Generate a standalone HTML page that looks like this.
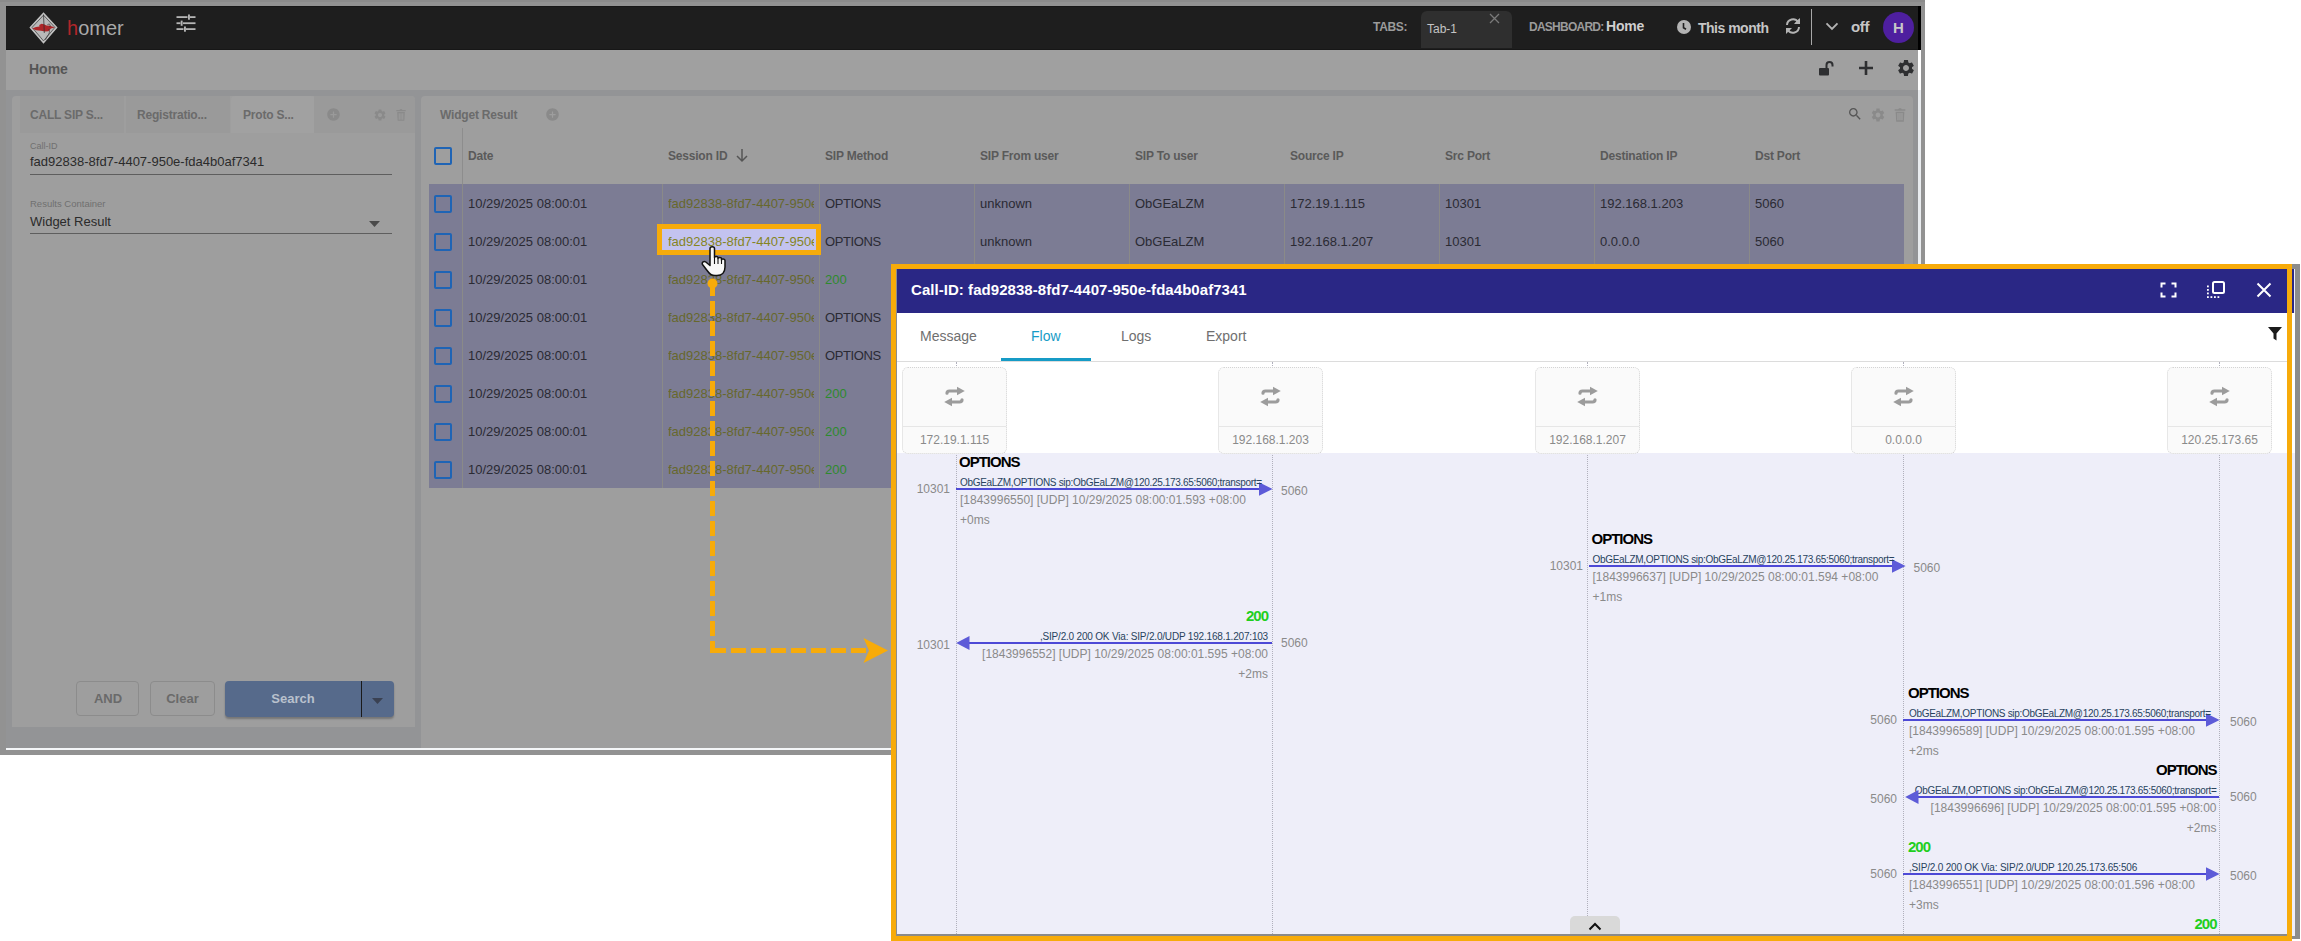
<!DOCTYPE html>
<html><head><meta charset="utf-8"><title>homer</title>
<style>
html,body{margin:0;padding:0;}
body{width:2301px;height:941px;position:relative;overflow:hidden;background:#ffffff;font-family:"Liberation Sans",sans-serif;}
.t{position:absolute;white-space:nowrap;}
.r{position:absolute;}
</style></head><body>
<div class="r" style="left:0px;top:0px;width:1925px;height:755px;background:#929292;"></div>
<div class="r" style="left:0px;top:0px;width:1925px;height:2px;background:#8b8b8b;"></div>
<div class="r" style="left:6px;top:6px;width:1915px;height:743px;background:#939496;"></div>
<div class="r" style="left:6px;top:748px;width:1915px;height:2px;background:#f4f6f8;"></div>
<div class="r" style="left:6px;top:6px;width:1915px;height:44px;background:#1e1e1e;"></div>
<div class="r" style="left:6px;top:6px;width:1912px;height:1px;background:#171717;"></div>
<div class="r" style="left:6px;top:49px;width:1912px;height:1px;background:#171717;"></div>
<div class="r" style="left:1918px;top:6px;width:3px;height:44px;background:#000;"></div>
<div class="r" style="left:1918px;top:50px;width:3px;height:40px;background:#ffffff;"></div>
<div class="r" style="left:1918px;top:90px;width:3px;height:658px;background:#e9ecef;"></div>
<div class="r" style="left:6px;top:50px;width:1912px;height:40px;background:#a0a0a0;"></div>
<svg class="r" style="left:29px;top:12px" width="30" height="32" viewBox="0 0 30 32">
<path d="M14.5 1.3 L27.7 15.4 L14.5 30.8 L1.3 15.4 Z" fill="#b9b9b9" stroke="#c4c4c4" stroke-width="1.3"/>
<path d="M14.5 3.2 L25.9 15.4 L14.5 28.9 L3.1 15.4 Z" fill="none" stroke="#3a3a3a" stroke-width="0.7"/>
<path d="M3.2 16.6 L7 15 L10.5 14.6 L10.2 13 L12.5 11.8 L15 12.3 L17.5 13.5 L21 13.8 L25.8 15.4 L22 16.4 L19.5 19.2 L16 19.6 L12 18.8 L7 18.2 Z" fill="#ad2528"/>
<path d="M14.5 2.5 L15.3 21" stroke="#2a2a2a" stroke-width="0.7" fill="none"/>
<path d="M18.5 12.5 C21 11.5 22 13 20.5 15 M19.5 17 C21.5 19 20 22 18.5 24 C17.5 25.5 17 27 16.5 28" stroke="#333" stroke-width="0.7" fill="none"/>
</svg>
<div class="t" style="left:67px;top:15.5px;font-size:20px;line-height:24px;color:#a9a9a9;font-weight:400;"><span style="color:#b0262a">h</span>omer</div>
<svg class="r" style="left:176px;top:13.7px" width="20" height="20" viewBox="0 0 20 20" fill="#b5b5b5">
<rect x="0.5" y="2.2" width="11" height="1.8"/><rect x="12" y="0.5" width="1.9" height="5.2"/><rect x="14" y="2.2" width="5.5" height="1.8"/>
<rect x="0.5" y="8.3" width="4" height="1.8"/><rect x="4.7" y="6.6" width="1.9" height="5.2"/><rect x="7" y="8.3" width="12.5" height="1.8"/>
<rect x="0.5" y="14.2" width="7" height="1.8"/><rect x="8" y="12.5" width="1.9" height="5.2"/><rect x="10" y="14.2" width="9.5" height="1.8"/>
</svg>
<div class="t" style="left:1373px;top:16.5px;font-size:12px;line-height:20px;color:#9b9b9b;font-weight:700;letter-spacing:-0.3px">TABS:</div>
<div class="r" style="left:1421px;top:11px;width:91px;height:37px;background:#2f2f2f;border-radius:6px 6px 0 0"></div>
<div class="t" style="left:1427px;top:19.0px;font-size:12px;line-height:20px;color:#c4c4c4;font-weight:500;">Tab-1</div>
<svg class="r" style="left:1489px;top:13px" width="11" height="11" viewBox="0 0 11 11"><path d="M1 1L10 10M10 1L1 10" stroke="#7a7a7a" stroke-width="1.3"/></svg>
<div class="t" style="left:1529px;top:16.5px;font-size:12px;line-height:20px;color:#9b9b9b;font-weight:700;letter-spacing:-0.75px">DASHBOARD:</div>
<div class="t" style="left:1606px;top:16.0px;font-size:14px;line-height:20px;color:#cfcfcf;font-weight:700;letter-spacing:-0.2px">Home</div>
<svg class="r" style="left:1676px;top:19px" width="16" height="16" viewBox="0 0 16 16"><circle cx="8" cy="8" r="7" fill="#b3b3b3"/><path d="M7.5 4 V8.8 L10 10.3" stroke="#1e1e1e" stroke-width="1.6" fill="none"/></svg>
<div class="t" style="left:1698px;top:17.5px;font-size:14px;line-height:20px;color:#c6c6c6;font-weight:700;letter-spacing:-0.5px">This month</div>
<svg class="r" style="left:1784px;top:17px" width="18" height="18" viewBox="0 0 18 18" fill="none" stroke="#b3b3b3" stroke-width="2">
<path d="M3 8 A6 6 0 0 1 14 5"/><path d="M15 10 A6 6 0 0 1 4 13"/>
<path d="M15.5 1.5 V6.5 H10.5" fill="#b3b3b3" stroke="none"/><path d="M16 1 L16 7 L10 7 Z" fill="#b3b3b3" stroke="none"/>
<path d="M2 17 L2 11 L8 11 Z" fill="#b3b3b3" stroke="none"/>
</svg>
<div class="r" style="left:1811px;top:9px;width:1px;height:36px;background:#a8a8a8;"></div>
<svg class="r" style="left:1825px;top:21px" width="14" height="10" viewBox="0 0 14 10"><path d="M1.5 2.3L7 7.8L12.5 2.3" stroke="#b3b3b3" stroke-width="1.9" fill="none"/></svg>
<div class="t" style="left:1851px;top:16.5px;font-size:15px;line-height:20px;color:#c6c6c6;font-weight:700;letter-spacing:-0.3px">off</div>
<div class="r" style="left:1883px;top:12px;width:31px;height:31px;border-radius:50%;background:#4e1f9f"></div>
<div class="t" style="left:1883px;top:18.0px;font-size:15px;line-height:20px;color:#c8c8c8;font-weight:700;width:31px;text-align:center">H</div>
<div class="t" style="left:29px;top:59.0px;font-size:14px;line-height:20px;color:#555555;font-weight:700;">Home</div>
<svg class="r" style="left:1818px;top:60px" width="16" height="16" viewBox="0 0 16 16" fill="#2e2f31">
<rect x="1" y="8" width="10" height="7.5" rx="1"/><path d="M8.5 8 V5 A3 3 0 0 1 14.5 5 V6.5" stroke="#2e2f31" stroke-width="2" fill="none"/></svg>
<svg class="r" style="left:1858px;top:60px" width="16" height="16" viewBox="0 0 16 16"><path d="M8 1V15M1 8H15" stroke="#2e2f31" stroke-width="2.6"/></svg>
<svg class="r" style="left:1896px;top:58px" width="20" height="20" viewBox="0 0 24 24"><path fill="#2e2f31" d="M19.14 12.94c.04-.3.06-.61.06-.94 0-.32-.02-.64-.07-.94l2.03-1.58c.18-.14.23-.41.12-.61l-1.92-3.32c-.12-.22-.37-.29-.59-.22l-2.39.96c-.5-.38-1.03-.7-1.62-.94l-.36-2.54c-.04-.24-.24-.41-.48-.41h-3.84c-.24 0-.43.17-.47.41l-.36 2.54c-.59.24-1.13.57-1.62.94l-2.39-.96c-.22-.08-.47 0-.59.22L2.74 8.87c-.12.21-.08.47.12.61l2.03 1.58c-.05.3-.09.63-.09.94s.02.64.07.94l-2.03 1.58c-.18.14-.23.41-.12.61l1.92 3.32c.12.22.37.29.59.22l2.39-.96c.5.38 1.03.7 1.62.94l.36 2.54c.05.24.24.41.48.41h3.84c.24 0 .44-.17.47-.41l.36-2.54c.59-.24 1.13-.56 1.62-.94l2.39.96c.22.08.47 0 .59-.22l1.92-3.32c.12-.22.07-.47-.12-.61l-2.01-1.58zM12 15.6c-1.98 0-3.6-1.62-3.6-3.6s1.62-3.6 3.6-3.6 3.6 1.62 3.6 3.6-1.62 3.6-3.6 3.6z"/></svg>
<div class="r" style="left:12px;top:96px;width:403px;height:631px;background:#9e9e9e;border-radius:4px 4px 0 0"></div>
<div class="r" style="left:20px;top:96px;width:104px;height:37px;background:#9a9a9a;"></div>
<div class="r" style="left:126px;top:96px;width:104px;height:37px;background:#9a9a9a;"></div>
<div class="r" style="left:231px;top:96px;width:84px;height:37px;background:#a1a1a1;border-radius:4px 4px 0 0"></div>
<div class="r" style="left:314px;top:96px;width:101px;height:37px;background:#9a9a9a;border-radius:0 4px 0 0"></div>
<div class="t" style="left:30px;top:104.5px;font-size:12px;line-height:20px;color:#6b6b6b;font-weight:700;letter-spacing:-0.2px">CALL SIP S...</div>
<div class="t" style="left:137px;top:104.5px;font-size:12px;line-height:20px;color:#6b6b6b;font-weight:700;letter-spacing:-0.2px">Registratio...</div>
<div class="t" style="left:243px;top:104.5px;font-size:12px;line-height:20px;color:#6b6b6b;font-weight:700;letter-spacing:-0.2px">Proto S...</div>
<svg class="r" style="left:326px;top:107px" width="15" height="15" viewBox="0 0 24 24"><path fill="#8a8a8a" d="M12 2C6.48 2 2 6.48 2 12s4.48 10 10 10 10-4.48 10-10S17.52 2 12 2zm5 11h-4v4h-2v-4H7v-2h4V7h2v4h4v2z"/></svg>
<svg class="r" style="left:373px;top:108px" width="14" height="14" viewBox="0 0 24 24"><path fill="#8a8a8a" d="M19.14 12.94c.04-.3.06-.61.06-.94 0-.32-.02-.64-.07-.94l2.03-1.58c.18-.14.23-.41.12-.61l-1.92-3.32c-.12-.22-.37-.29-.59-.22l-2.39.96c-.5-.38-1.03-.7-1.62-.94l-.36-2.54c-.04-.24-.24-.41-.48-.41h-3.84c-.24 0-.43.17-.47.41l-.36 2.54c-.59.24-1.13.57-1.62.94l-2.39-.96c-.22-.08-.47 0-.59.22L2.74 8.87c-.12.21-.08.47.12.61l2.03 1.58c-.05.3-.09.63-.09.94s.02.64.07.94l-2.03 1.58c-.18.14-.23.41-.12.61l1.92 3.32c.12.22.37.29.59.22l2.39-.96c.5.38 1.03.7 1.62.94l.36 2.54c.05.24.24.41.48.41h3.84c.24 0 .44-.17.47-.41l.36-2.54c.59-.24 1.13-.56 1.62-.94l2.39.96c.22.08.47 0 .59-.22l1.92-3.32c.12-.22.07-.47-.12-.61l-2.01-1.58zM12 15.6c-1.98 0-3.6-1.62-3.6-3.6s1.62-3.6 3.6-3.6 3.6 1.62 3.6 3.6-1.62 3.6-3.6 3.6z"/></svg>
<svg class="r" style="left:394px;top:108px" width="14" height="14" viewBox="0 0 24 24"><path fill="#8a8a8a" d="M4 3.5H9.5L10.5 2H13.5L14.5 3.5H20V5.5H4Z"/><path fill="#8a8a8a" d="M5.5 7H18.5L17.7 22H6.3Z M8 9V20H10V9Z M11 9V20H13V9Z M14 9V20H16V9Z" fill-rule="evenodd"/></svg>
<div class="t" style="left:30px;top:135.5px;font-size:9px;line-height:20px;color:#707070;font-weight:400;">Call-ID</div>
<div class="t" style="left:30px;top:152.0px;font-size:13px;line-height:20px;color:#2b2b2b;font-weight:400;letter-spacing:0px">fad92838-8fd7-4407-950e-fda4b0af7341</div>
<div class="r" style="left:30px;top:174px;width:362px;height:1px;background:#5e5e5e;"></div>
<div class="t" style="left:30px;top:194.0px;font-size:9.5px;line-height:20px;color:#707070;font-weight:400;">Results Container</div>
<div class="t" style="left:30px;top:212.0px;font-size:13px;line-height:20px;color:#2b2b2b;font-weight:400;">Widget Result</div>
<svg class="r" style="left:369px;top:221px" width="11" height="6" viewBox="0 0 11 6"><path d="M0 0H11L5.5 6Z" fill="#4a4a4a"/></svg>
<div class="r" style="left:30px;top:233px;width:362px;height:1px;background:#5e5e5e;"></div>
<div class="r" style="left:76px;top:681px;width:63px;height:35px;border:1px solid #8c8c8c;border-radius:4px;box-sizing:border-box"></div>
<div class="t" style="left:76px;top:688.5px;font-size:13px;line-height:20px;color:#6a6a6a;font-weight:700;width:64px;text-align:center">AND</div>
<div class="r" style="left:150px;top:681px;width:65px;height:35px;border:1px solid #8c8c8c;border-radius:4px;box-sizing:border-box"></div>
<div class="t" style="left:150px;top:688.5px;font-size:13px;line-height:20px;color:#6a6a6a;font-weight:700;width:65px;text-align:center">Clear</div>
<div class="r" style="left:225px;top:681px;width:169px;height:36px;background:#566a8b;border-radius:4px;box-shadow:0 2px 2px rgba(0,0,0,0.25)"></div>
<div class="t" style="left:225px;top:688.5px;font-size:13px;line-height:20px;color:#b9c1cd;font-weight:700;width:136px;text-align:center">Search</div>
<div class="r" style="left:361px;top:681px;width:1px;height:36px;background:#1a1a1a;"></div>
<svg class="r" style="left:372px;top:698px" width="11" height="6" viewBox="0 0 11 6"><path d="M0 0H11L5.5 6Z" fill="#3a4152"/></svg>
<div class="r" style="left:421px;top:96px;width:1492px;height:652px;background:#9e9e9e;border-radius:4px 4px 0 0"></div>
<div class="t" style="left:440px;top:104.5px;font-size:12px;line-height:20px;color:#6b6b6b;font-weight:700;letter-spacing:-0.2px">Widget Result</div>
<svg class="r" style="left:545px;top:107px" width="15" height="15" viewBox="0 0 24 24"><path fill="#8a8a8a" d="M12 2C6.48 2 2 6.48 2 12s4.48 10 10 10 10-4.48 10-10S17.52 2 12 2zm5 11h-4v4h-2v-4H7v-2h4V7h2v4h4v2z"/></svg>
<svg class="r" style="left:1847px;top:106px" width="16" height="16" viewBox="0 0 24 24"><path fill="#555" d="M15.5 14h-.79l-.28-.27C15.41 12.59 16 11.11 16 9.5 16 5.91 13.09 3 9.5 3S3 5.91 3 9.5 5.91 16 9.5 16c1.61 0 3.09-.59 4.23-1.57l.27.28v.79l5 4.99L20.49 19l-4.99-5zm-6 0C7.01 14 5 11.99 5 9.5S7.01 5 9.5 5 14 7.01 14 9.5 11.99 14 9.5 14z"/></svg>
<svg class="r" style="left:1870px;top:107px" width="16" height="16" viewBox="0 0 24 24"><path fill="#8a8a8a" d="M19.14 12.94c.04-.3.06-.61.06-.94 0-.32-.02-.64-.07-.94l2.03-1.58c.18-.14.23-.41.12-.61l-1.92-3.32c-.12-.22-.37-.29-.59-.22l-2.39.96c-.5-.38-1.03-.7-1.62-.94l-.36-2.54c-.04-.24-.24-.41-.48-.41h-3.84c-.24 0-.43.17-.47.41l-.36 2.54c-.59.24-1.13.57-1.62.94l-2.39-.96c-.22-.08-.47 0-.59.22L2.74 8.87c-.12.21-.08.47.12.61l2.03 1.58c-.05.3-.09.63-.09.94s.02.64.07.94l-2.03 1.58c-.18.14-.23.41-.12.61l1.92 3.32c.12.22.37.29.59.22l2.39-.96c.5.38 1.03.7 1.62.94l.36 2.54c.05.24.24.41.48.41h3.84c.24 0 .44-.17.47-.41l.36-2.54c.59-.24 1.13-.56 1.62-.94l2.39.96c.22.08.47 0 .59-.22l1.92-3.32c.12-.22.07-.47-.12-.61l-2.01-1.58zM12 15.6c-1.98 0-3.6-1.62-3.6-3.6s1.62-3.6 3.6-3.6 3.6 1.62 3.6 3.6-1.62 3.6-3.6 3.6z"/></svg>
<svg class="r" style="left:1892px;top:107px" width="16" height="16" viewBox="0 0 24 24"><path fill="#8a8a8a" d="M4 3.5H9.5L10.5 2H13.5L14.5 3.5H20V5.5H4Z"/><path fill="#8a8a8a" d="M5.5 7H18.5L17.7 22H6.3Z M8 9V20H10V9Z M11 9V20H13V9Z M14 9V20H16V9Z" fill-rule="evenodd"/></svg>
<div class="r" style="left:434px;top:147px;width:18px;height:18px;border:2px solid #1f64b5;border-radius:2px;box-sizing:border-box"></div>
<div class="r" style="left:462px;top:128px;width:1px;height:56px;background:#8d8d8d;"></div>
<div class="t" style="left:468px;top:145.5px;font-size:12px;line-height:20px;color:#5a5a5a;font-weight:700;letter-spacing:-0.2px">Date</div>
<div class="t" style="left:668px;top:145.5px;font-size:12px;line-height:20px;color:#5a5a5a;font-weight:700;letter-spacing:-0.2px">Session ID</div>
<div class="t" style="left:825px;top:145.5px;font-size:12px;line-height:20px;color:#5a5a5a;font-weight:700;letter-spacing:-0.2px">SIP Method</div>
<div class="t" style="left:980px;top:145.5px;font-size:12px;line-height:20px;color:#5a5a5a;font-weight:700;letter-spacing:-0.2px">SIP From user</div>
<div class="t" style="left:1135px;top:145.5px;font-size:12px;line-height:20px;color:#5a5a5a;font-weight:700;letter-spacing:-0.2px">SIP To user</div>
<div class="t" style="left:1290px;top:145.5px;font-size:12px;line-height:20px;color:#5a5a5a;font-weight:700;letter-spacing:-0.2px">Source IP</div>
<div class="t" style="left:1445px;top:145.5px;font-size:12px;line-height:20px;color:#5a5a5a;font-weight:700;letter-spacing:-0.2px">Src Port</div>
<div class="t" style="left:1600px;top:145.5px;font-size:12px;line-height:20px;color:#5a5a5a;font-weight:700;letter-spacing:-0.2px">Destination IP</div>
<div class="t" style="left:1755px;top:145.5px;font-size:12px;line-height:20px;color:#5a5a5a;font-weight:700;letter-spacing:-0.2px">Dst Port</div>
<svg class="r" style="left:735px;top:148px" width="14" height="15" viewBox="0 0 14 15"><path d="M7 1V13M2 8L7 13L12 8" stroke="#555" stroke-width="1.5" fill="none"/></svg>
<div class="r" style="left:429px;top:184px;width:1475px;height:304px;background:#7c7c94;"></div>
<div class="r" style="left:462px;top:184px;width:1px;height:304px;background:#8a8a88;"></div>
<div class="r" style="left:662px;top:184px;width:1px;height:304px;background:#8a8a88;"></div>
<div class="r" style="left:819px;top:184px;width:1px;height:304px;background:#8a8a88;"></div>
<div class="r" style="left:974px;top:184px;width:1px;height:304px;background:#8a8a88;"></div>
<div class="r" style="left:1129px;top:184px;width:1px;height:304px;background:#8a8a88;"></div>
<div class="r" style="left:1284px;top:184px;width:1px;height:304px;background:#8a8a88;"></div>
<div class="r" style="left:1439px;top:184px;width:1px;height:304px;background:#8a8a88;"></div>
<div class="r" style="left:1594px;top:184px;width:1px;height:304px;background:#8a8a88;"></div>
<div class="r" style="left:1749px;top:184px;width:1px;height:304px;background:#8a8a88;"></div>
<div class="r" style="left:434px;top:194.5px;width:18px;height:18px;border:2px solid #1f64b5;border-radius:2px;box-sizing:border-box"></div>
<div class="t" style="left:468px;top:193.5px;font-size:13px;line-height:20px;color:#2a2a33;font-weight:400;">10/29/2025 08:00:01</div>
<div class="t" style="left:668px;top:193.5px;font-size:13px;line-height:20px;color:#67682c;font-weight:400;width:146px;overflow:hidden;white-space:nowrap">fad92838-8fd7-4407-950e</div>
<div class="t" style="left:825px;top:193.5px;font-size:13px;line-height:20px;color:#2a2a33;font-weight:400;letter-spacing:-0.4px">OPTIONS</div>
<div class="t" style="left:980px;top:193.5px;font-size:13px;line-height:20px;color:#2a2a33;font-weight:400;">unknown</div>
<div class="t" style="left:1135px;top:193.5px;font-size:13px;line-height:20px;color:#2a2a33;font-weight:400;">ObGEaLZM</div>
<div class="t" style="left:1290px;top:193.5px;font-size:13px;line-height:20px;color:#2a2a33;font-weight:400;">172.19.1.115</div>
<div class="t" style="left:1445px;top:193.5px;font-size:13px;line-height:20px;color:#2a2a33;font-weight:400;">10301</div>
<div class="t" style="left:1600px;top:193.5px;font-size:13px;line-height:20px;color:#2a2a33;font-weight:400;">192.168.1.203</div>
<div class="t" style="left:1755px;top:193.5px;font-size:13px;line-height:20px;color:#2a2a33;font-weight:400;">5060</div>
<div class="r" style="left:434px;top:232.5px;width:18px;height:18px;border:2px solid #1f64b5;border-radius:2px;box-sizing:border-box"></div>
<div class="t" style="left:468px;top:231.5px;font-size:13px;line-height:20px;color:#2a2a33;font-weight:400;">10/29/2025 08:00:01</div>
<div class="t" style="left:825px;top:231.5px;font-size:13px;line-height:20px;color:#2a2a33;font-weight:400;letter-spacing:-0.4px">OPTIONS</div>
<div class="t" style="left:980px;top:231.5px;font-size:13px;line-height:20px;color:#2a2a33;font-weight:400;">unknown</div>
<div class="t" style="left:1135px;top:231.5px;font-size:13px;line-height:20px;color:#2a2a33;font-weight:400;">ObGEaLZM</div>
<div class="t" style="left:1290px;top:231.5px;font-size:13px;line-height:20px;color:#2a2a33;font-weight:400;">192.168.1.207</div>
<div class="t" style="left:1445px;top:231.5px;font-size:13px;line-height:20px;color:#2a2a33;font-weight:400;">10301</div>
<div class="t" style="left:1600px;top:231.5px;font-size:13px;line-height:20px;color:#2a2a33;font-weight:400;">0.0.0.0</div>
<div class="t" style="left:1755px;top:231.5px;font-size:13px;line-height:20px;color:#2a2a33;font-weight:400;">5060</div>
<div class="r" style="left:434px;top:270.5px;width:18px;height:18px;border:2px solid #1f64b5;border-radius:2px;box-sizing:border-box"></div>
<div class="t" style="left:468px;top:269.5px;font-size:13px;line-height:20px;color:#2a2a33;font-weight:400;">10/29/2025 08:00:01</div>
<div class="t" style="left:668px;top:269.5px;font-size:13px;line-height:20px;color:#67682c;font-weight:400;width:146px;overflow:hidden;white-space:nowrap">fad92838-8fd7-4407-950e</div>
<div class="t" style="left:825px;top:269.5px;font-size:13px;line-height:20px;color:#2e8a2e;font-weight:400;">200</div>
<div class="r" style="left:434px;top:308.5px;width:18px;height:18px;border:2px solid #1f64b5;border-radius:2px;box-sizing:border-box"></div>
<div class="t" style="left:468px;top:307.5px;font-size:13px;line-height:20px;color:#2a2a33;font-weight:400;">10/29/2025 08:00:01</div>
<div class="t" style="left:668px;top:307.5px;font-size:13px;line-height:20px;color:#67682c;font-weight:400;width:146px;overflow:hidden;white-space:nowrap">fad92838-8fd7-4407-950e</div>
<div class="t" style="left:825px;top:307.5px;font-size:13px;line-height:20px;color:#2a2a33;font-weight:400;letter-spacing:-0.4px">OPTIONS</div>
<div class="r" style="left:434px;top:346.5px;width:18px;height:18px;border:2px solid #1f64b5;border-radius:2px;box-sizing:border-box"></div>
<div class="t" style="left:468px;top:345.5px;font-size:13px;line-height:20px;color:#2a2a33;font-weight:400;">10/29/2025 08:00:01</div>
<div class="t" style="left:668px;top:345.5px;font-size:13px;line-height:20px;color:#67682c;font-weight:400;width:146px;overflow:hidden;white-space:nowrap">fad92838-8fd7-4407-950e</div>
<div class="t" style="left:825px;top:345.5px;font-size:13px;line-height:20px;color:#2a2a33;font-weight:400;letter-spacing:-0.4px">OPTIONS</div>
<div class="r" style="left:434px;top:384.5px;width:18px;height:18px;border:2px solid #1f64b5;border-radius:2px;box-sizing:border-box"></div>
<div class="t" style="left:468px;top:383.5px;font-size:13px;line-height:20px;color:#2a2a33;font-weight:400;">10/29/2025 08:00:01</div>
<div class="t" style="left:668px;top:383.5px;font-size:13px;line-height:20px;color:#67682c;font-weight:400;width:146px;overflow:hidden;white-space:nowrap">fad92838-8fd7-4407-950e</div>
<div class="t" style="left:825px;top:383.5px;font-size:13px;line-height:20px;color:#2e8a2e;font-weight:400;">200</div>
<div class="r" style="left:434px;top:422.5px;width:18px;height:18px;border:2px solid #1f64b5;border-radius:2px;box-sizing:border-box"></div>
<div class="t" style="left:468px;top:421.5px;font-size:13px;line-height:20px;color:#2a2a33;font-weight:400;">10/29/2025 08:00:01</div>
<div class="t" style="left:668px;top:421.5px;font-size:13px;line-height:20px;color:#67682c;font-weight:400;width:146px;overflow:hidden;white-space:nowrap">fad92838-8fd7-4407-950e</div>
<div class="t" style="left:825px;top:421.5px;font-size:13px;line-height:20px;color:#2e8a2e;font-weight:400;">200</div>
<div class="r" style="left:434px;top:460.5px;width:18px;height:18px;border:2px solid #1f64b5;border-radius:2px;box-sizing:border-box"></div>
<div class="t" style="left:468px;top:459.5px;font-size:13px;line-height:20px;color:#2a2a33;font-weight:400;">10/29/2025 08:00:01</div>
<div class="t" style="left:668px;top:459.5px;font-size:13px;line-height:20px;color:#67682c;font-weight:400;width:146px;overflow:hidden;white-space:nowrap">fad92838-8fd7-4407-950e</div>
<div class="t" style="left:825px;top:459.5px;font-size:13px;line-height:20px;color:#2e8a2e;font-weight:400;">200</div>
<div class="r" style="left:657px;top:224px;width:164px;height:31px;background:#f6ab0a;"></div>
<div class="r" style="left:662px;top:229px;width:154px;height:21px;background:#c3c3ef;"></div>
<div class="t" style="left:668px;top:231.5px;font-size:13px;line-height:20px;color:#85851f;font-weight:400;width:146px;overflow:hidden;white-space:nowrap">fad92838-8fd7-4407-950e</div>
<svg class="r" style="left:0;top:0" width="2301" height="941"><circle cx="712.5" cy="283.5" r="5" fill="#f7ab0a"/><rect x="710" y="281" width="5" height="15" fill="#f7ab0a"/><rect x="710" y="301" width="5" height="15" fill="#f7ab0a"/><rect x="710" y="321" width="5" height="15" fill="#f7ab0a"/><rect x="710" y="341" width="5" height="15" fill="#f7ab0a"/><rect x="710" y="361" width="5" height="15" fill="#f7ab0a"/><rect x="710" y="381" width="5" height="15" fill="#f7ab0a"/><rect x="710" y="401" width="5" height="15" fill="#f7ab0a"/><rect x="710" y="421" width="5" height="15" fill="#f7ab0a"/><rect x="710" y="441" width="5" height="15" fill="#f7ab0a"/><rect x="710" y="461" width="5" height="15" fill="#f7ab0a"/><rect x="710" y="481" width="5" height="15" fill="#f7ab0a"/><rect x="710" y="501" width="5" height="15" fill="#f7ab0a"/><rect x="710" y="521" width="5" height="15" fill="#f7ab0a"/><rect x="710" y="541" width="5" height="15" fill="#f7ab0a"/><rect x="710" y="561" width="5" height="15" fill="#f7ab0a"/><rect x="710" y="581" width="5" height="15" fill="#f7ab0a"/><rect x="710" y="601" width="5" height="15" fill="#f7ab0a"/><rect x="710" y="621" width="5" height="15" fill="#f7ab0a"/><rect x="710" y="641" width="5" height="12" fill="#f7ab0a"/><rect x="710" y="648" width="16" height="5" fill="#f7ab0a"/><rect x="731" y="648" width="15" height="5" fill="#f7ab0a"/><rect x="751" y="648" width="15" height="5" fill="#f7ab0a"/><rect x="771" y="648" width="15" height="5" fill="#f7ab0a"/><rect x="791" y="648" width="15" height="5" fill="#f7ab0a"/><rect x="811" y="648" width="15" height="5" fill="#f7ab0a"/><rect x="831" y="648" width="15" height="5" fill="#f7ab0a"/><rect x="851" y="648" width="15" height="5" fill="#f7ab0a"/><path d="M863.5 638 L888 650.5 L863.5 663 L869 650.5 Z" fill="#f7ab0a"/></svg>
<div class="r" style="left:891px;top:264px;width:1409px;height:675px;background:#8c8c8c;"></div>
<div class="r" style="left:2292px;top:269px;width:3px;height:667px;background:#eeeef9;"></div>
<div class="r" style="left:2292px;top:269px;width:2px;height:44px;background:#2a2785;"></div>
<div class="r" style="left:2292px;top:313px;width:3px;height:140px;background:#ffffff;"></div>
<div class="r" style="left:891px;top:264px;width:1401px;height:677px;background:#f7ab0a;"></div>
<div class="r" style="left:896px;top:269px;width:1391px;height:44px;background:#2a2785;"></div>
<div class="t" style="left:911px;top:279.5px;font-size:15px;line-height:20px;color:#ffffff;font-weight:700;letter-spacing:0.05px">Call-ID: fad92838-8fd7-4407-950e-fda4b0af7341</div>
<svg class="r" style="left:2160px;top:282px" width="17" height="16" viewBox="0 0 17 16" fill="none" stroke="#fff" stroke-width="2">
<path d="M1.5 5.5V1.5H5.5M11.5 1.5H15.5V5.5M15.5 10.5V14.5H11.5M5.5 14.5H1.5V10.5"/></svg>
<svg class="r" style="left:2206px;top:280px" width="20" height="20" viewBox="0 0 20 20" fill="#fff">
<rect x="7" y="2" width="11" height="11" rx="1.5" fill="none" stroke="#fff" stroke-width="2"/>
<rect x="1" y="5.5" width="1.8" height="1.8"/><rect x="1" y="9" width="1.8" height="1.8"/><rect x="1" y="12.5" width="1.8" height="1.8"/>
<rect x="1" y="16.2" width="1.8" height="1.8"/><rect x="4.5" y="16.2" width="1.8" height="1.8"/><rect x="8" y="16.2" width="1.8" height="1.8"/><rect x="11.5" y="16.2" width="1.8" height="1.8"/>
</svg>
<svg class="r" style="left:2256px;top:282px" width="16" height="16" viewBox="0 0 16 16"><path d="M1.5 1.5L14.5 14.5M14.5 1.5L1.5 14.5" stroke="#fff" stroke-width="2"/></svg>
<div class="r" style="left:896px;top:313px;width:1391px;height:48px;background:#ffffff;"></div>
<div class="t" style="left:920px;top:326.0px;font-size:14px;line-height:20px;color:#6f6f6f;font-weight:400;">Message</div>
<div class="t" style="left:1031px;top:326.0px;font-size:14px;line-height:20px;color:#169bc6;font-weight:400;">Flow</div>
<div class="t" style="left:1121px;top:326.0px;font-size:14px;line-height:20px;color:#6f6f6f;font-weight:400;">Logs</div>
<div class="t" style="left:1206px;top:326.0px;font-size:14px;line-height:20px;color:#6f6f6f;font-weight:400;">Export</div>
<div class="r" style="left:1001px;top:358px;width:90px;height:3px;background:#169bc6;"></div>
<svg class="r" style="left:2267px;top:326px" width="16" height="16" viewBox="0 0 16 16"><path d="M1 1H15L9.5 7.5V14.5L6.5 12.5V7.5Z" fill="#1c1c1c"/></svg>
<div class="r" style="left:896px;top:361px;width:1391px;height:1px;background:#dcdcdc;"></div>
<div class="r" style="left:896px;top:362px;width:1391px;height:91px;background:#ffffff;"></div>
<div class="r" style="left:896px;top:453px;width:1391px;height:481px;background:#eeeef9;"></div>
<div class="r" style="left:896px;top:934px;width:1391px;height:2px;background:#8a8a8a;"></div>
<div class="r" style="left:896px;top:269px;width:1px;height:667px;background:#8c8c8c;"></div>
<div class="r" style="left:956px;top:362px;width:0;height:572px;border-left:1px dotted #b0b0bc"></div>
<div class="r" style="left:1272px;top:362px;width:0;height:572px;border-left:1px dotted #b0b0bc"></div>
<div class="r" style="left:1587px;top:362px;width:0;height:572px;border-left:1px dotted #b0b0bc"></div>
<div class="r" style="left:1903px;top:362px;width:0;height:572px;border-left:1px dotted #b0b0bc"></div>
<div class="r" style="left:2219px;top:362px;width:0;height:572px;border-left:1px dotted #b0b0bc"></div>
<div class="r" style="left:902px;top:367px;width:105px;height:87px;background:#fafafa;border:1px dotted #d4d4d4;border-radius:6px;box-sizing:border-box"></div>
<div class="r" style="left:903px;top:426px;width:103px;height:1px;background:#e6e6e6;"></div>
<div class="t" style="left:902px;top:429.5px;font-size:12px;line-height:20px;color:#8a8a8a;font-weight:400;width:105px;text-align:center">172.19.1.115</div>
<svg class="r" style="left:943px;top:386px" width="23" height="22" viewBox="0 0 23 22">
<path d="M4 7.2 C4 5.6 5 5 6.5 5 H15" stroke="#9c9c9c" stroke-width="3.2" fill="none" stroke-linecap="round"/><path d="M14 0.8 L21.8 5 L14 9.2 Z" fill="#9c9c9c"/>
<path d="M19 13.8 C19 15.4 18 16 16.5 16 H8" stroke="#9c9c9c" stroke-width="3.2" fill="none" stroke-linecap="round"/><path d="M9 11.8 L1.2 16 L9 20.2 Z" fill="#9c9c9c"/>
</svg>
<div class="r" style="left:1218px;top:367px;width:105px;height:87px;background:#fafafa;border:1px dotted #d4d4d4;border-radius:6px;box-sizing:border-box"></div>
<div class="r" style="left:1219px;top:426px;width:103px;height:1px;background:#e6e6e6;"></div>
<div class="t" style="left:1218px;top:429.5px;font-size:12px;line-height:20px;color:#8a8a8a;font-weight:400;width:105px;text-align:center">192.168.1.203</div>
<svg class="r" style="left:1259px;top:386px" width="23" height="22" viewBox="0 0 23 22">
<path d="M4 7.2 C4 5.6 5 5 6.5 5 H15" stroke="#9c9c9c" stroke-width="3.2" fill="none" stroke-linecap="round"/><path d="M14 0.8 L21.8 5 L14 9.2 Z" fill="#9c9c9c"/>
<path d="M19 13.8 C19 15.4 18 16 16.5 16 H8" stroke="#9c9c9c" stroke-width="3.2" fill="none" stroke-linecap="round"/><path d="M9 11.8 L1.2 16 L9 20.2 Z" fill="#9c9c9c"/>
</svg>
<div class="r" style="left:1535px;top:367px;width:105px;height:87px;background:#fafafa;border:1px dotted #d4d4d4;border-radius:6px;box-sizing:border-box"></div>
<div class="r" style="left:1536px;top:426px;width:103px;height:1px;background:#e6e6e6;"></div>
<div class="t" style="left:1535px;top:429.5px;font-size:12px;line-height:20px;color:#8a8a8a;font-weight:400;width:105px;text-align:center">192.168.1.207</div>
<svg class="r" style="left:1576px;top:386px" width="23" height="22" viewBox="0 0 23 22">
<path d="M4 7.2 C4 5.6 5 5 6.5 5 H15" stroke="#9c9c9c" stroke-width="3.2" fill="none" stroke-linecap="round"/><path d="M14 0.8 L21.8 5 L14 9.2 Z" fill="#9c9c9c"/>
<path d="M19 13.8 C19 15.4 18 16 16.5 16 H8" stroke="#9c9c9c" stroke-width="3.2" fill="none" stroke-linecap="round"/><path d="M9 11.8 L1.2 16 L9 20.2 Z" fill="#9c9c9c"/>
</svg>
<div class="r" style="left:1851px;top:367px;width:105px;height:87px;background:#fafafa;border:1px dotted #d4d4d4;border-radius:6px;box-sizing:border-box"></div>
<div class="r" style="left:1852px;top:426px;width:103px;height:1px;background:#e6e6e6;"></div>
<div class="t" style="left:1851px;top:429.5px;font-size:12px;line-height:20px;color:#8a8a8a;font-weight:400;width:105px;text-align:center">0.0.0.0</div>
<svg class="r" style="left:1892px;top:386px" width="23" height="22" viewBox="0 0 23 22">
<path d="M4 7.2 C4 5.6 5 5 6.5 5 H15" stroke="#9c9c9c" stroke-width="3.2" fill="none" stroke-linecap="round"/><path d="M14 0.8 L21.8 5 L14 9.2 Z" fill="#9c9c9c"/>
<path d="M19 13.8 C19 15.4 18 16 16.5 16 H8" stroke="#9c9c9c" stroke-width="3.2" fill="none" stroke-linecap="round"/><path d="M9 11.8 L1.2 16 L9 20.2 Z" fill="#9c9c9c"/>
</svg>
<div class="r" style="left:2167px;top:367px;width:105px;height:87px;background:#fafafa;border:1px dotted #d4d4d4;border-radius:6px;box-sizing:border-box"></div>
<div class="r" style="left:2168px;top:426px;width:103px;height:1px;background:#e6e6e6;"></div>
<div class="t" style="left:2167px;top:429.5px;font-size:12px;line-height:20px;color:#8a8a8a;font-weight:400;width:105px;text-align:center">120.25.173.65</div>
<svg class="r" style="left:2208px;top:386px" width="23" height="22" viewBox="0 0 23 22">
<path d="M4 7.2 C4 5.6 5 5 6.5 5 H15" stroke="#9c9c9c" stroke-width="3.2" fill="none" stroke-linecap="round"/><path d="M14 0.8 L21.8 5 L14 9.2 Z" fill="#9c9c9c"/>
<path d="M19 13.8 C19 15.4 18 16 16.5 16 H8" stroke="#9c9c9c" stroke-width="3.2" fill="none" stroke-linecap="round"/><path d="M9 11.8 L1.2 16 L9 20.2 Z" fill="#9c9c9c"/>
</svg>
<div class="r" style="left:956px;top:488px;width:304px;height:2px;background:#4d49d6;"></div>
<svg class="r" style="left:1259px;top:482px" width="14" height="14" viewBox="0 0 14 14"><path d="M0 0.25L13.6 7L0 13.75Z" fill="#5d5bd8"/></svg>
<div class="t" style="left:959px;top:452.0px;font-size:15px;line-height:20px;color:#000;font-weight:700;letter-spacing:-1px">OPTIONS</div>
<div class="t" style="left:960px;top:472.5px;font-size:10px;line-height:20px;color:#28435e;font-weight:400;letter-spacing:-0.31px;white-space:nowrap">ObGEaLZM,OPTIONS sip:ObGEaLZM@120.25.173.65:5060;transport=</div>
<div class="t" style="left:960px;top:489.5px;font-size:12px;line-height:20px;color:#8a8a8a;font-weight:400;white-space:nowrap">[1843996550] [UDP] 10/29/2025 08:00:01.593 +08:00</div>
<div class="t" style="left:960px;top:509.5px;font-size:12px;line-height:20px;color:#8a8a8a;font-weight:400;">+0ms</div>
<div class="t" style="right:1351px;top:479.0px;font-size:12px;line-height:20px;color:#8a8a8a;font-weight:400;text-align:right;">10301</div>
<div class="t" style="left:1281px;top:480.5px;font-size:12px;line-height:20px;color:#8a8a8a;font-weight:400;">5060</div>
<div class="r" style="left:1589px;top:565px;width:304px;height:2px;background:#4d49d6;"></div>
<svg class="r" style="left:1892px;top:559px" width="14" height="14" viewBox="0 0 14 14"><path d="M0 0.25L13.6 7L0 13.75Z" fill="#5d5bd8"/></svg>
<div class="t" style="left:1591.5px;top:529.0px;font-size:15px;line-height:20px;color:#000;font-weight:700;letter-spacing:-1px">OPTIONS</div>
<div class="t" style="left:1592.5px;top:549.5px;font-size:10px;line-height:20px;color:#28435e;font-weight:400;letter-spacing:-0.31px;white-space:nowrap">ObGEaLZM,OPTIONS sip:ObGEaLZM@120.25.173.65:5060;transport=</div>
<div class="t" style="left:1592.5px;top:566.5px;font-size:12px;line-height:20px;color:#8a8a8a;font-weight:400;white-space:nowrap">[1843996637] [UDP] 10/29/2025 08:00:01.594 +08:00</div>
<div class="t" style="left:1592.5px;top:586.5px;font-size:12px;line-height:20px;color:#8a8a8a;font-weight:400;">+1ms</div>
<div class="t" style="right:718px;top:556.0px;font-size:12px;line-height:20px;color:#8a8a8a;font-weight:400;text-align:right;">10301</div>
<div class="t" style="left:1913.5px;top:557.5px;font-size:12px;line-height:20px;color:#8a8a8a;font-weight:400;">5060</div>
<div class="r" style="left:968px;top:642px;width:304px;height:2px;background:#4d49d6;"></div>
<div class="t" style="right:1033px;top:606.0px;font-size:15px;line-height:20px;color:#1fcf1f;font-weight:700;text-align:right;letter-spacing:-1px">200</div>
<div class="t" style="right:1033px;top:626.5px;font-size:10px;line-height:20px;color:#28435e;font-weight:400;text-align:right;letter-spacing:-0.19px;white-space:nowrap">,SIP/2.0 200 OK Via: SIP/2.0/UDP 192.168.1.207:103</div>
<div class="t" style="right:1033px;top:643.5px;font-size:12px;line-height:20px;color:#8a8a8a;font-weight:400;text-align:right;white-space:nowrap">[1843996552] [UDP] 10/29/2025 08:00:01.595 +08:00</div>
<div class="t" style="right:1033px;top:663.5px;font-size:12px;line-height:20px;color:#8a8a8a;font-weight:400;text-align:right;">+2ms</div>
<div class="t" style="right:1351px;top:634.5px;font-size:12px;line-height:20px;color:#8a8a8a;font-weight:400;text-align:right;">10301</div>
<div class="t" style="left:1281px;top:633.0px;font-size:12px;line-height:20px;color:#8a8a8a;font-weight:400;">5060</div>
<svg class="r" style="left:955.5px;top:636px" width="14" height="14" viewBox="0 0 14 14"><path d="M13.5 0L0.2 7L13.5 14Z" fill="#5d5bd8"/></svg>
<div class="r" style="left:1903px;top:719px;width:304px;height:2px;background:#4d49d6;"></div>
<svg class="r" style="left:2206px;top:713px" width="14" height="14" viewBox="0 0 14 14"><path d="M0 0.25L13.6 7L0 13.75Z" fill="#5d5bd8"/></svg>
<div class="t" style="left:1908px;top:683.0px;font-size:15px;line-height:20px;color:#000;font-weight:700;letter-spacing:-1px">OPTIONS</div>
<div class="t" style="left:1909px;top:703.5px;font-size:10px;line-height:20px;color:#28435e;font-weight:400;letter-spacing:-0.31px;white-space:nowrap">ObGEaLZM,OPTIONS sip:ObGEaLZM@120.25.173.65:5060;transport=</div>
<div class="t" style="left:1909px;top:720.5px;font-size:12px;line-height:20px;color:#8a8a8a;font-weight:400;white-space:nowrap">[1843996589] [UDP] 10/29/2025 08:00:01.595 +08:00</div>
<div class="t" style="left:1909px;top:740.5px;font-size:12px;line-height:20px;color:#8a8a8a;font-weight:400;">+2ms</div>
<div class="t" style="right:404px;top:710.0px;font-size:12px;line-height:20px;color:#8a8a8a;font-weight:400;text-align:right;">5060</div>
<div class="t" style="left:2230px;top:711.5px;font-size:12px;line-height:20px;color:#8a8a8a;font-weight:400;">5060</div>
<div class="r" style="left:1915px;top:796px;width:304px;height:2px;background:#4d49d6;"></div>
<div class="t" style="right:84.5px;top:760.0px;font-size:15px;line-height:20px;color:#000;font-weight:700;text-align:right;letter-spacing:-1px">OPTIONS</div>
<div class="t" style="right:84.5px;top:780.5px;font-size:10px;line-height:20px;color:#28435e;font-weight:400;text-align:right;letter-spacing:-0.31px;white-space:nowrap">ObGEaLZM,OPTIONS sip:ObGEaLZM@120.25.173.65:5060;transport=</div>
<div class="t" style="right:84.5px;top:797.5px;font-size:12px;line-height:20px;color:#8a8a8a;font-weight:400;text-align:right;white-space:nowrap">[1843996696] [UDP] 10/29/2025 08:00:01.595 +08:00</div>
<div class="t" style="right:84.5px;top:817.5px;font-size:12px;line-height:20px;color:#8a8a8a;font-weight:400;text-align:right;">+2ms</div>
<div class="t" style="right:404px;top:788.5px;font-size:12px;line-height:20px;color:#8a8a8a;font-weight:400;text-align:right;">5060</div>
<div class="t" style="left:2230px;top:787.0px;font-size:12px;line-height:20px;color:#8a8a8a;font-weight:400;">5060</div>
<svg class="r" style="left:1904.5px;top:790px" width="14" height="14" viewBox="0 0 14 14"><path d="M13.5 0L0.2 7L13.5 14Z" fill="#5d5bd8"/></svg>
<div class="r" style="left:1903px;top:873px;width:304px;height:2px;background:#4d49d6;"></div>
<svg class="r" style="left:2206px;top:867px" width="14" height="14" viewBox="0 0 14 14"><path d="M0 0.25L13.6 7L0 13.75Z" fill="#5d5bd8"/></svg>
<div class="t" style="left:1908px;top:837.0px;font-size:15px;line-height:20px;color:#1fcf1f;font-weight:700;letter-spacing:-1px">200</div>
<div class="t" style="left:1909px;top:857.5px;font-size:10px;line-height:20px;color:#28435e;font-weight:400;letter-spacing:-0.19px;white-space:nowrap">,SIP/2.0 200 OK Via: SIP/2.0/UDP 120.25.173.65:506</div>
<div class="t" style="left:1909px;top:874.5px;font-size:12px;line-height:20px;color:#8a8a8a;font-weight:400;white-space:nowrap">[1843996551] [UDP] 10/29/2025 08:00:01.596 +08:00</div>
<div class="t" style="left:1909px;top:894.5px;font-size:12px;line-height:20px;color:#8a8a8a;font-weight:400;">+3ms</div>
<div class="t" style="right:404px;top:864.0px;font-size:12px;line-height:20px;color:#8a8a8a;font-weight:400;text-align:right;">5060</div>
<div class="t" style="left:2230px;top:865.5px;font-size:12px;line-height:20px;color:#8a8a8a;font-weight:400;">5060</div>
<div class="t" style="right:84.5px;top:914.0px;font-size:15px;line-height:20px;color:#1fcf1f;font-weight:700;text-align:right;letter-spacing:-1px">200</div>
<div class="r" style="left:1570px;top:916px;width:50px;height:18px;background:#d9d9d9;border-radius:5px 5px 0 0"></div>
<svg class="r" style="left:1588px;top:922px" width="14" height="9" viewBox="0 0 14 9"><path d="M1.5 7.5L7 2L12.5 7.5" stroke="#111" stroke-width="2" fill="none"/></svg>
<svg class="r" style="left:700px;top:245px" width="28" height="33" viewBox="0 0 28 33">
<path d="M10 3.5 C10 1 14.5 1 14.5 3.5 V12.5 C14.5 11 18 11 18 12.5 V13.5 C18 12 21.5 12 21.5 13.5 V15 C21.5 13.5 25 13.5 25 15.5 V22 C25 27 22 30.5 17 30.5 H15 C11.5 30.5 9.5 29 7.5 26 L2.5 19.5 C1.5 17.5 4 15.5 5.8 17 L10 20.5 Z" fill="#f8f8f8" stroke="#111" stroke-width="1.5" stroke-linejoin="round"/>
<path d="M14.5 12.5V19M18 13.5V19M21.5 15V19" stroke="#111" stroke-width="1.1"/>
</svg>
</body></html>
